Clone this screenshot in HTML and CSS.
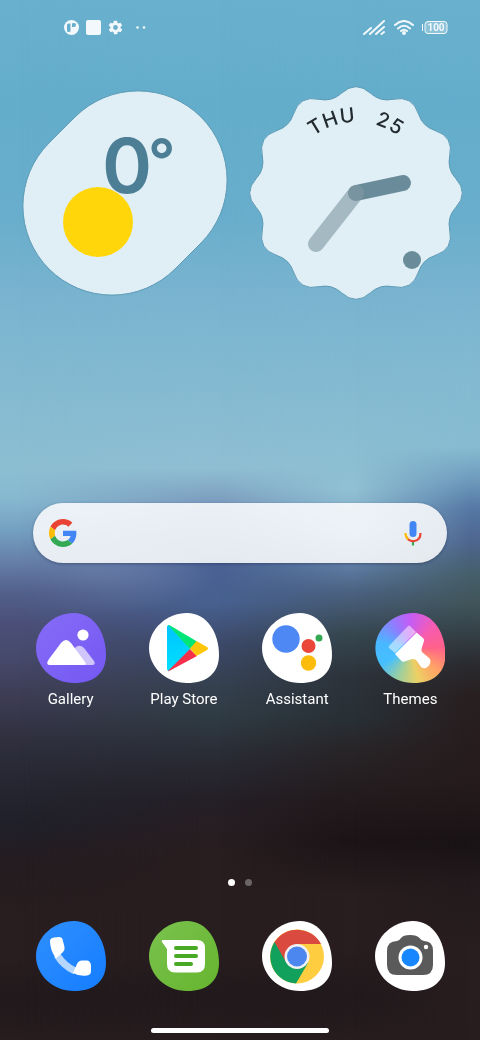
FILE: index.html
```html
<!DOCTYPE html>
<html lang="en">
<head>
  <meta charset="UTF-8">
  <meta name="viewport" content="width=device-width, initial-scale=1">
  <title>Home</title>
  <link rel="stylesheet" href="styles.css">
</head>
<body>
  <!-- four vertical colour ramps faded into each other from left to right -->
  <div class="wallpaper">
    <div class="ramp left"></div>
    <div class="ramp middle"></div>
    <div class="ramp inner"></div>
    <div class="ramp right"></div>
  </div>

  <header class="status">
    <div class="status-left">
      <svg width="15" height="15" viewBox="0 0 15 15"><circle cx="7.500" cy="7.500" r="7.500"/><path class="status-hole" d="M3 5Q3 3.500 4.500 3.500H6.500V10.500Q6.500 12 5 12H4.500Q3 12 3 10.500ZM8 3.500H9V7H8Z"/><circle cx="10" cy="5" r="2" class="status-hole"/></svg>
      <svg width="15" height="15" viewBox="0 0 15 15"><rect width="15" height="15" rx="2"/></svg>
      <svg width="15" height="15" viewBox="1 1 22 22"><path d="M19.400 13c0-.3.1-.6.1-1s0-.7-.1-1l2.100-1.600c.2-.2.2-.4.100-.6l-2-3.500c-.1-.2-.4-.3-.6-.2l-2.500 1c-.5-.4-1.100-.7-1.700-1l-.4-2.600c0-.3-.2-.5-.5-.5h-4c-.2 0-.4.2-.5.4l-.4 2.700c-.6.2-1.100.6-1.700 1l-2.500-1c-.2-.1-.5 0-.6.2l-2 3.500c-.1.200-.1.500.1.600L4.600 11c0 .3-.1.600-.1 1s0 .7.1 1l-2.100 1.600c-.2.200-.2.400-.1.600l2 3.500c.1.200.4.300.6.200l2.500-1c.5.4 1.100.7 1.700 1l.4 2.600c0 .3.200.5.5.5h4c.2 0 .5-.2.5-.4l.4-2.700c.6-.2 1.100-.6 1.700-1l2.500 1c.2.1.5 0 .6-.2l2-3.500c.1-.2.1-.5-.1-.6ZM12 15.500a3.500 3.500 0 1 1 0-7a3.500 3.500 0 0 1 0 7Z"/></svg>
      <svg width="22" height="15" viewBox="0 0 22 15"><circle cx="7.500" cy="7.500" r="1.300"/><circle cx="14" cy="7.500" r="1.300"/></svg>
    </div>
    <div class="status-right">
      <svg width="23" height="15" viewBox="0 0 23 15"><path class="line" d="M1 14L8 8M7 14L21 1M13 14L21 7M18.500 14L21 12"/></svg>
      <svg width="20" height="15" viewBox="0 0 20 15"><path class="line" d="M1 5Q10-3 19 5M4 8.500Q10 3 16 8.500M7 11Q10 8.500 13 11"/><circle cx="10" cy="13" r="2"/></svg>
      <svg width="26" height="15" viewBox="0 0 26 15"><rect class="line thin" x="3" y="1.500" width="22" height="12" rx="3"/><path d="M0 4h1v7H0Z"/><text class="charge" x="14" y="11">100</text></svg>
    </div>
  </header>

  <main>
    <section class="widgets">
      <svg class="weather" viewBox="0 0 206 206" aria-label="Weather">
        <path class="plate" d="M53 27A89 89 0 0 1 179 153L153 179A89 89 0 0 1 27 53Z"/>
        <text class="temp" x="80" y="103">0<tspan class="degree" x="126" y="92">°</tspan></text>
        <circle cx="76" cy="132" r="35" fill="#ffd60a"/>
      </svg>
      <svg class="clock" viewBox="-107 -107 214 214" aria-label="Clock">
        <path class="plate" d="M99.700-14.600Q113 0 99.700 14.600Q91 24 93.700 37Q98 56.500 79 62.500Q66.500 66.500 62.500 79Q56.500 98 37 93.700Q24 91 14.600 99.700Q0 113-14.600 99.700Q-24 91-37 93.700Q-56.500 98-62.500 79Q-66.500 66.500-79 62.500Q-98 56.500-93.700 37Q-91 24-99.700 14.600Q-113 0-99.700-14.600Q-91-24-93.700-37Q-98-56.500-79-62.500Q-66.500-66.500-62.500-79Q-56.500-98-37-93.700Q-24-91-14.600-99.700Q0-113 14.600-99.700Q24-91 37-93.700Q56.500-98 62.500-79Q66.500-66.500 79-62.500Q98-56.500 93.700-37Q91-24 99.700-14.600Z"/>
        <path id="dateArc" d="M-71 0A71 71 0 0 1 71 0" fill="none"/>
        <text class="date"><textPath href="#dateArc" startOffset="50%">THU&nbsp;&nbsp;&nbsp;25</textPath></text>
        <path class="hour" d="M0 0L47-10"/>
        <path class="minute" d="M0 0L-40 51"/>
        <circle cx="56" cy="67" r="9" fill="#6a8b99"/>
      </svg>
    </section>

    <form class="search">
      <svg width="28" height="28" viewBox="0 0 48 48"><path fill="#ea4335" d="M24 9.500c3.540 0 6.710 1.220 9.210 3.600l6.850-6.850C35.900 2.380 30.470 0 24 0 14.620 0 6.510 5.380 2.560 13.220l7.980 6.190C12.430 13.720 17.740 9.500 24 9.500z"/><path fill="#4285f4" d="M46.980 24.550c0-1.570-.15-3.090-.38-4.550H24v9.020h12.940c-.58 2.960-2.260 5.480-4.780 7.180l7.730 6c4.510-4.180 7.090-10.360 7.090-17.650z"/><path fill="#fbbc05" d="M10.530 28.590c-.48-1.450-.76-2.990-.76-4.590s.27-3.140.76-4.590l-7.980-6.190C.92 16.460 0 20.120 0 24s.92 7.540 2.560 10.780l7.970-6.190z"/><path fill="#34a853" d="M24 48c6.480 0 11.930-2.130 15.890-5.810l-7.730-6c-2.150 1.450-4.920 2.300-8.160 2.300-6.260 0-11.570-4.220-13.470-9.910l-7.980 6.190C6.510 42.620 14.620 48 24 48z"/></svg>
      <input type="search" aria-label="Search">
      <button type="button" aria-label="Voice search">
        <svg width="18" height="26" viewBox="0 0 18 26"><rect x="5.500" y="1" width="7" height="16" rx="3.500" fill="#4285f4"/><g fill="none" stroke-width="2.200"><path stroke="#34a853" d="M9 21v4.500"/><path stroke="#ea4335" d="M16.500 13C16.500 23 5 23 2.500 17"/><path stroke="#fbbc05" d="M1.500 13C1.500 16 2.500 18 4.200 19.300"/></g></svg>
      </button>
    </form>

    <nav class="apps">
      <a href="#gallery">
        <svg class="icon" viewBox="0 0 70 70">
          <defs><linearGradient id="violet" x2="1" y2="1"><stop stop-color="#866cf8"/><stop offset="1" stop-color="#7458f2"/></linearGradient></defs>
          <path fill="url(#violet)" d="M38 0C58 0 70 20 70 42C70 60 58 70 38 70C17 70 0 54 0 35C0 16 18 0 38 0Z"/>
          <path fill="#d0c6fc" d="M36 37L40 34Q44 31 48 35L58 48Q60 52 56 52H40Z"/>
          <path fill="#fff" d="M13 46L25 30Q30 24 35 30L49 49Q51 52 48 52H14Q9 52 13 46Z"/>
          <circle cx="47" cy="22" r="5.600" fill="#fff"/>
        </svg>
        <span>Gallery</span>
      </a>
      <a href="#play">
        <svg class="icon" viewBox="0 0 70 70">
          <defs><linearGradient id="cyan" x2="0" y2="1"><stop stop-color="#00c3ff"/><stop offset="1" stop-color="#00e0ff"/></linearGradient></defs>
          <path fill="#fff" d="M38 0C58 0 70 20 70 42C70 60 58 70 38 70C17 70 0 54 0 35C0 16 18 0 38 0Z"/>
          <path fill="url(#cyan)" d="M18 14Q18 12 20 12L42 35.500L20 58Q18 58 18 56Z"/>
          <path fill="#00e676" d="M19 12Q20 11.500 22 13L48 28.500L41 36Z"/>
          <path fill="#f4304a" d="M19 58Q20 58.500 22 57L48 43L41 36Z"/>
          <path fill="#ffc508" d="M47.500 28L58 34Q60 35.500 58 37L47.500 43L41 35.500Z"/>
        </svg>
        <span>Play Store</span>
      </a>
      <a href="#assistant">
        <svg class="icon" viewBox="0 0 70 70">
          <path fill="#fff" d="M38 0C58 0 70 20 70 42C70 60 58 70 38 70C17 70 0 54 0 35C0 16 18 0 38 0Z"/>
          <circle cx="24" cy="26" r="13.700" fill="#4d88f5"/>
          <circle cx="46.500" cy="33" r="7" fill="#ea4639"/>
          <circle cx="57" cy="25" r="3.500" fill="#34a853"/>
          <circle cx="46.500" cy="50" r="7.700" fill="#fbbc0c"/>
        </svg>
        <span>Assistant</span>
      </a>
      <a href="#themes">
        <svg class="icon rainbow" viewBox="0 0 70 70">
          <path fill="#fff" fill-opacity=".5" d="M14 33L33 13Q34 12 35 13L41 19L20 40L14 35Q13 34 14 33Z"/>
          <path fill="#fff" d="M41.500 19.500L48 25Q49.500 26.500 49 28L46.500 36Q46 38 47.500 39.500L54 45Q57 48 54 52.500Q50 57 46 54L41.500 47.500Q40 45.500 37.500 46L29 48.500Q27.500 49 26.500 48L20 41Z"/>
        </svg>
        <span>Themes</span>
      </a>
    </nav>
  </main>

  <footer>
    <div class="pages"><i class="on"></i><i></i></div>
    <nav class="apps">
      <a href="#phone" aria-label="Phone">
        <svg class="icon" viewBox="0 0 70 70">
          <defs><linearGradient id="blue" x2="1" y2="1"><stop stop-color="#308fff"/><stop offset="1" stop-color="#147dff"/></linearGradient></defs>
          <path fill="url(#blue)" d="M38 0C58 0 70 20 70 42C70 60 58 70 38 70C17 70 0 54 0 35C0 16 18 0 38 0Z"/>
          <path fill="none" stroke="#b5d6ff" stroke-width="7" d="M21 34Q28 45 39 50"/>
          <path fill="#fff" d="M14 20Q14 17 18 16.500L23 16Q26.500 16 27 20L28.500 26Q29 29 27 31L20 37.500Q14 29 14 20Z"/>
          <path fill="#fff" d="M37 52L41 43Q42.500 39.500 46 39.500H51Q54 39.500 55 44V50Q55 54 51 54.500Q43 55.500 37 52Z"/>
        </svg>
      </a>
      <a href="#messages" aria-label="Messages">
        <svg class="icon" viewBox="0 0 70 70">
          <defs><linearGradient id="green" x2="1" y2="1"><stop stop-color="#7bc24f"/><stop offset="1" stop-color="#65b52e"/></linearGradient></defs>
          <path fill="url(#green)" d="M38 0C58 0 70 20 70 42C70 60 58 70 38 70C17 70 0 54 0 35C0 16 18 0 38 0Z"/>
          <path fill="#fff" d="M14 19H48Q56 19 56 27V43Q56 51.500 48 51.500H26Q18 51.500 18 43V28L13 21Q12 19 14 19Z"/>
          <path fill="none" stroke="#49a925" stroke-width="4" stroke-linecap="round" d="M27 27H47M27 35H47M27 43H42"/>
        </svg>
      </a>
      <a href="#chrome" aria-label="Chrome">
        <svg class="icon" viewBox="0 0 70 70">
          <path fill="#fff" d="M38 0C58 0 70 20 70 42C70 60 58 70 38 70C17 70 0 54 0 35C0 16 18 0 38 0Z"/>
          <circle cx="35" cy="35.500" r="27" fill="#ffcd40"/>
          <path fill="#12a05d" d="M12.500 21A27 27 0 0 0 34 62.500L46 42L35 35Z"/>
          <path fill="#db4a3f" d="M12.500 21A27 27 0 0 1 59 23H35L24.500 42Z"/>
          <circle cx="35" cy="35.500" r="12.500" fill="#f1f1f1"/>
          <circle cx="35" cy="35.500" r="10" fill="#4c87f0"/>
        </svg>
      </a>
      <a href="#camera" aria-label="Camera">
        <svg class="icon" viewBox="0 0 70 70">
          <path fill="#fff" d="M38 0C58 0 70 20 70 42C70 60 58 70 38 70C17 70 0 54 0 35C0 16 18 0 38 0Z"/>
          <path fill="#5a5a5a" d="M12 30Q12 20 22 20Q24 20 26 17Q28 14 35 14Q42 14 44.500 17Q46.500 20 49 20Q58 20 58 30V44Q58 54 48 54H22Q12 54 12 44Z"/>
          <circle cx="35.500" cy="36.500" r="12" fill="#fff"/>
          <circle cx="35.500" cy="36.500" r="9" fill="#1787ff"/>
          <circle cx="51" cy="26" r="2.200" fill="#fff"/>
        </svg>
      </a>
    </nav>
    <div class="home-bar"></div>
  </footer>
</body>
</html>
```

FILE: styles.css
```css
* { box-sizing: border-box; }
body {
  margin: 0;
  min-height: 100vh;
  display: flex;
  flex-direction: column;
  font-family: Roboto, sans-serif;
  color: #fff;
}
main { flex: 1; }
a { color: inherit; text-decoration: none; }
svg { display: block; }

.wallpaper { position: fixed; inset: 0; z-index: -1; }
.ramp { position: absolute; inset: 0; }
.left {
  background: linear-gradient(#69b0ce 0%, #63adcb 10%, #69aecc 21%, #78b3cf 28%, #84bad1 37%, #8cbed2 45%, #86b8d0 48%, #74a0c0 51%, #667fa8 54%, #52608a 57%, #4b4f78 60%, #464a6c 63%, #3d3c54 67%, #30303f 71%, #262732 75%, #20202a 79%, #241c20 83%, #281d1f 88%, #281d1f 92%, #21191c 96%, #271c1e 100%);
}
.middle {
  background:
    radial-gradient(ellipse 26% 4% at 19% 55%, rgba(122, 138, 184, 0.7), transparent),
    linear-gradient(#69b0ce 0%, #63adcb 10%, #69aecc 21%, #78b3cf 28%, #84bad1 37%, #8fbed3 45%, #7e9fc0 48%, #6480b0 51%, #4a6294 54%, #47608f 58%, #3c4868 62%, #35404f 66%, #2f3b43 69%, #292a34 73%, #241f26 77%, #281d1f 82%, #281d1f 88%, #281d1f 92%, #21191c 96%, #271c1e 100%);
  mask-image: linear-gradient(90deg, transparent 4%, #000 42%);
}
.inner {
  background: linear-gradient(#69b0ce 0%, #63adcb 10%, #69aecc 21%, #78b3cf 28%, #84bad1 37%, #8fc0d3 47%, #80a8c6 51%, #6280a8 54%, #4a6180 57%, #36464f 61%, #2c333b 65%, #283036 69%, #282528 72%, #221a1c 77%, #1b1417 81%, #281d1f 86%, #281d1f 91%, #21191c 96%, #271c1e 100%);
  mask-image: linear-gradient(90deg, transparent 46%, #000 72%);
}
.right {
  background: linear-gradient(#69b0ce 0%, #63adcb 10%, #69aecc 21%, #78b3cf 28%, #84bad1 37%, #86bbd1 43%, #6f9cbd 46%, #5577a4 49%, #4e6690 52%, #465f6c 55%, #40555a 58%, #343f46 61%, #2a2a2e 64%, #281f20 67%, #261b1c 75%, #191315 81%, #221a1c 85%, #281d1f 91%, #271c1e 100%);
  mask-image: linear-gradient(90deg, transparent 74%, #000 98%);
}

.status {
  display: flex;
  justify-content: space-between;
  padding: 20px 32px 0 64px;
}
.status svg { fill: #f2f8fb; }
.status-left { display: flex; gap: 7px; }
.status-right { display: flex; gap: 8px; }
.status .line { fill: none; stroke: #f2f8fb; stroke-width: 2; stroke-linecap: round; }
.status .thin { stroke-width: 1; fill: rgba(255, 255, 255, 0.25); }
.status .status-hole { fill: #66aecc; }
.charge { font: bold 10px Roboto, sans-serif; text-anchor: middle; }

.widgets {
  display: flex;
  align-items: center;
  gap: 21px;
  padding: 51px 17px 0 22px;
}
.weather { flex: 206; min-width: 0; }
.clock { flex: 214; min-width: 0; }
.plate { fill: #e0eef5; stroke: #5c9ab5; stroke-width: 1; }
.temp { font: 600 76px Inter, sans-serif; fill: #4c7f95; }
.degree { font-size: 60px; }
.date {
  font: 500 20px Inter, sans-serif;
  letter-spacing: 1px;
  text-anchor: middle;
  fill: #222b2f;
}
.hour, .minute { fill: none; stroke-width: 16; stroke-linecap: round; }
.hour { stroke: #6a8b99; }
.minute { stroke: #819aa4; stroke-opacity: 0.63; }

.search {
  display: flex;
  align-items: center;
  height: 60px;
  margin: 203px 33px 0;
  padding: 0 25px 0 16px;
  border-radius: 30px;
  background: rgba(251, 252, 253, 0.88);
  box-shadow: 0 1px 3px rgba(30, 40, 70, 0.45);
}
.search input {
  flex: 1;
  min-width: 0;
  height: 40px;
  border: none;
  outline: none;
  background: none;
  font-size: 16px;
}
.search button { border: none; padding: 0; background: none; cursor: pointer; }

.apps {
  display: grid;
  grid-template-columns: repeat(4, 1fr);
  padding: 0 13px 0 14px;
}
main .apps { margin-top: 50px; }
.apps a {
  display: flex;
  flex-direction: column;
  align-items: center;
  gap: 6px;
  font-size: 15px;
  line-height: 20px;
}
.icon { width: 70px; height: 70px; }
.rainbow {
  background: conic-gradient(#c45cf5 0deg, #f85cae 50deg, #ff6289 90deg, #ffa465 130deg, #ecd064 165deg, #a0cf9c 200deg, #45bfff 240deg, #48b8ff 280deg, #8f7dff 325deg, #c45cf5 360deg);
  clip-path: path("M38 0C58 0 70 20 70 42C70 60 58 70 38 70C17 70 0 54 0 35C0 16 18 0 38 0Z");
}

.pages {
  display: flex;
  justify-content: center;
  gap: 10px;
  margin-bottom: 35px;
}
.pages i { width: 7px; height: 7px; border-radius: 50%; background: #6b6566; }
.pages .on { background: #fff; }
.home-bar {
  width: 37%;
  height: 5px;
  margin: 37px auto 7px;
  border-radius: 3px;
  background: #fff;
}
```
